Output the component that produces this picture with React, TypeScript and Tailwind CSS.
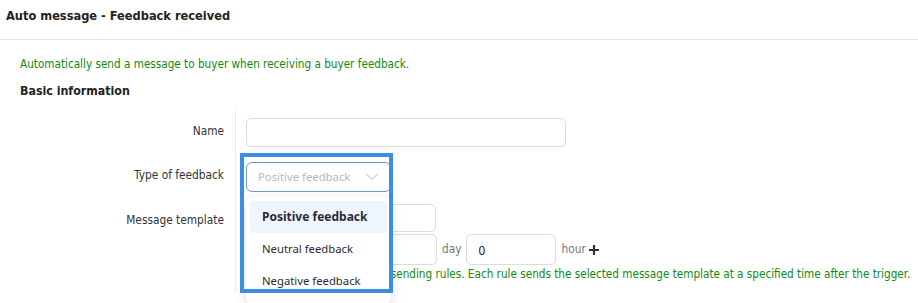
import React from "react";

const tahoma = { fontFamily: '"DejaVu Sans Condensed", "DejaVu Sans", sans-serif' };
const ui = { fontFamily: '"Noto Sans", "Open Sans", sans-serif' };

export default function App() {
  return (
    <div className="relative w-[918px] h-[303px] overflow-hidden bg-white text-[#333]" style={tahoma}>
      <div className="h-[40px] border-b border-[#e6e6e6] pl-[6px] pt-[8px] text-[12.7px] font-bold leading-[16px] text-[#222]">
        Auto message - Feedback received
      </div>
      <div className="px-[20px]">
        <div className="mt-[16px] text-[11.65px] leading-[16px] text-[#0f8a0f]">
          Automatically send a message to buyer when receiving a buyer feedback.
        </div>
        <div className="mt-[11px] text-[12.3px] font-bold leading-[16px] text-[#222]">Basic information</div>
        <div className="mt-[11px] flex">
          <div className="w-[204px] shrink-0 text-right text-[11.8px] text-[#333]">
            <div className="h-[36px] pt-[13px] leading-[16px]">Name</div>
            <div className="h-[45px] pt-[21px] leading-[16px]">Type of feedback</div>
            <div className="h-[40px] pt-[21px] leading-[16px]">Message template</div>
          </div>
          <div className="ml-[11px] flex-1 border-l border-[#ececec] pl-[10px] pt-[8px] pb-[10px]">
            <div className="h-[29px] w-[320px] rounded-[5px] border border-[#dcdcdc] bg-white" />
            <div className="relative mt-[15px] w-[145px]">
              <div className="flex h-[30px] items-center justify-between rounded-[6px] border border-[#6b98d8] bg-white pl-[11px] pr-[12px] text-[11.3px] text-[#b9b9b9]" style={ui}>
                <span>Positive feedback</span>
                <svg width="12" height="8" viewBox="0 0 12 8" fill="none">
                  <path d="M0.5 1 L6 6.5 L11.5 1" stroke="#b5b5b5" strokeWidth="1" />
                </svg>
              </div>
              <div className="absolute left-0 top-[35px] z-20 w-[145px] rounded-[8px] bg-white p-[4px] shadow-[0_3px_12px_rgba(0,0,0,0.14)]" style={ui}>
                <div className="flex h-[32px] items-center rounded-[4px] bg-[#eef5fe] pl-[12px] text-[12px] font-bold text-[#2b2b36]">Positive feedback</div>
                <div className="flex h-[32px] items-center pl-[12px] text-[11.3px] text-[#2b2b36]">Neutral feedback</div>
                <div className="flex h-[32px] items-center pl-[12px] text-[11.3px] text-[#2b2b36]">Negative feedback</div>
                <div className="h-[4px]" />
              </div>
            </div>
            <div className="mt-[12px] h-[28px] w-[190px] rounded-[5px] border border-[#dcdcdc]" />
            <div className="mt-[2px] flex items-center text-[11.8px]">
              <div className="h-[31px] w-[191px] rounded-[5px] border border-[#dcdcdc]" />
              <span className="ml-[5px] text-[#777]">day</span>
              <div className="ml-[4px] flex h-[31px] w-[90px] items-center rounded-[5px] border border-[#dcdcdc] pl-[12px] pt-[2px] text-[#222]" style={ui}>0</div>
              <span className="ml-[6px] text-[#777]">hour</span>
              <svg className="ml-[3px]" width="10" height="10" viewBox="0 0 10 10">
                <path d="M5 0 V10 M0 5 H10" stroke="#333" strokeWidth="2.2" />
              </svg>
            </div>
            <div className="mt-[1px] text-[11.65px] leading-[16px] text-[#0f8a0f] whitespace-nowrap">
              You can add one or several sending rules. Each rule sends the selected message template at a specified time after the trigger.
            </div>
          </div>
        </div>
      </div>
      <div className="absolute left-[240px] top-[153px] z-30 h-[140px] w-[153px] border-[4px] border-[#3b8fe3]" />
    </div>
  );
}
